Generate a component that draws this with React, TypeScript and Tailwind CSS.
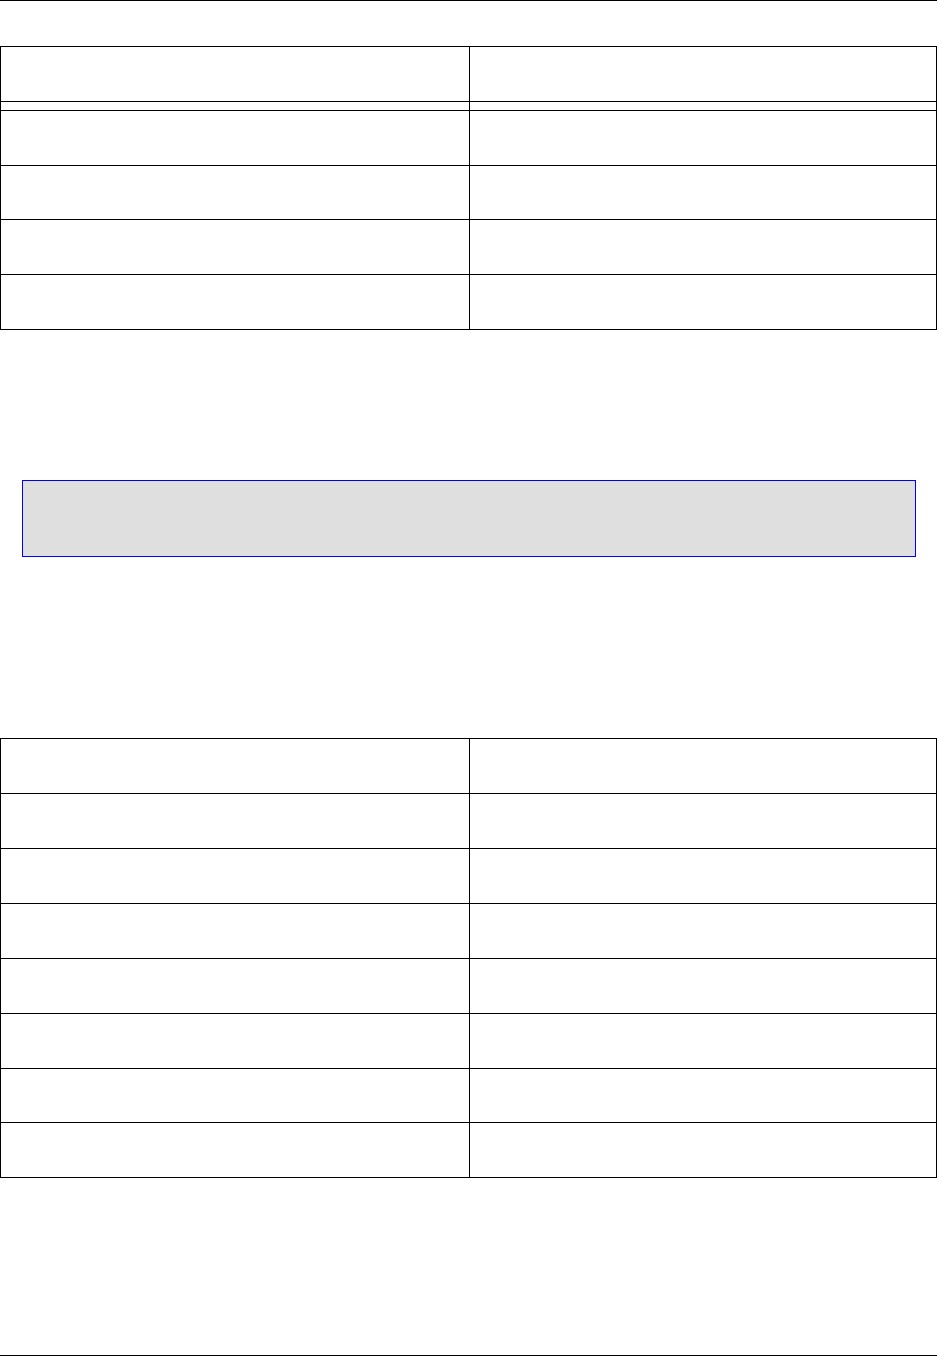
const Row = ({ height }: { height: string }) => (
  <>
    <div className={`${height} border-b border-r border-black`} />
    <div className={`${height} border-b border-r border-black`} />
  </>
);

const Table = ({ heights }: { heights: string[] }) => (
  <div className="grid w-[937px] grid-cols-[469px_467px] border-l border-t border-black">
    {heights.map((h, i) => (
      <Row key={i} height={h} />
    ))}
  </div>
);

export default function App() {
  return (
    <div className="flex h-[1357px] w-[938px] flex-col bg-white font-['Liberation_Sans',sans-serif]">
      <div className="h-px w-[937px] bg-black" />

      <div className="mt-[45px]">
        <Table
          heights={['h-[55px]', 'h-[9px]', 'h-[55px]', 'h-[54px]', 'h-[55px]', 'h-[55px]']}
        />
      </div>

      <div className="ml-[22px] mt-[150px] h-[77px] w-[894px] border border-[#0000ff] bg-[#dfdfdf]" />

      <div className="mt-[181px]">
        <Table
          heights={[
            'h-[55px]',
            'h-[55px]',
            'h-[55px]',
            'h-[55px]',
            'h-[55px]',
            'h-[55px]',
            'h-[54px]',
            'h-[55px]',
          ]}
        />
      </div>

      <div className="mt-[177px] h-px w-[937px] bg-black" />
    </div>
  );
}
